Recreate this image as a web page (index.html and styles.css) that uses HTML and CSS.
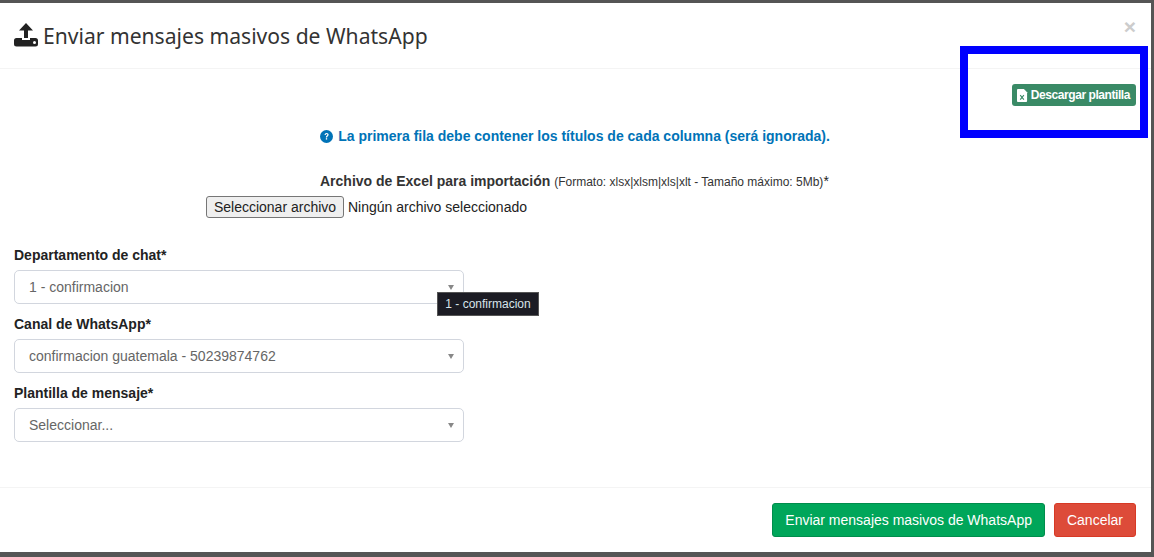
FILE: index.html
```html
<!DOCTYPE html>
<html lang="en">
<head>
  <meta charset="UTF-8">
  <title>Enviar mensajes masivos de WhatsApp</title>
  <link rel="stylesheet" href="styles.css">
</head>
<body>
  <div class="modal">
    <div class="modal-header">
      <h4 class="modal-title">
        <svg class="title-icon" viewBox="0 0 24 24" width="24" height="24">
          <path d="M12 0 L19 7.5 H14 V15 H10 V7.5 H5 Z" fill="#222"/>
          <path d="M2.5 15 H8 V17 H16 V15 H21.5 A2.5 2.5 0 0 1 24 17.5 V21 A2.5 2.5 0 0 1 21.5 23.5 H2.5 A2.5 2.5 0 0 1 0 21 V17.5 A2.5 2.5 0 0 1 2.5 15 Z" fill="#222"/>
          <circle cx="20.5" cy="19.5" r="1.5" fill="#fff"/>
        </svg>
        Enviar mensajes masivos de WhatsApp
      </h4>
      <span class="close">&times;</span>
    </div>

    <div class="modal-body">
      <div class="template-row">
        <a class="btn-template">
          <svg viewBox="0 0 12 14" width="11" height="13">
            <path d="M1 0 H7.5 L11 3.5 V13 A1 1 0 0 1 10 14 H1 A1 1 0 0 1 0 13 V1 A1 1 0 0 1 1 0 Z" fill="#fff"/>
            <path d="M3.5 6.5 L7.5 11.5 M7.5 6.5 L3.5 11.5" stroke="#3a8a66" stroke-width="1.2"/>
          </svg>
          Descargar plantilla
        </a>
      </div>

      <p class="info-line">
        <svg viewBox="0 0 14 14" width="13" height="13">
          <circle cx="7" cy="7" r="7" fill="#0073b7"/>
          <path d="M4.9 5.4 C4.9 4 6 3.2 7.1 3.2 C8.3 3.2 9.3 4 9.3 5.1 C9.3 6.6 7.6 6.6 7.6 8 H6.3 C6.3 6.2 7.9 6.1 7.9 5.2 C7.9 4.7 7.5 4.4 7 4.4 C6.5 4.4 6.2 4.8 6.2 5.4 Z" fill="#fff"/>
          <rect x="6.3" y="8.8" width="1.4" height="1.5" fill="#fff"/>
        </svg>
        La primera fila debe contener los títulos de cada columna (será ignorada).
      </p>

      <div class="upload-label">
        <b>Archivo de Excel para importación</b>
        <small>(Formato: xlsx|xlsm|xls|xlt - Tamaño máximo: 5Mb)</small><span class="req">*</span>
      </div>
      <div class="upload-row">
        <button class="file-btn">Seleccionar archivo</button>
        <span class="file-name">Ningún archivo seleccionado</span>
      </div>

      <div class="fields">
        <div class="field">
          <label>Departamento de chat*</label>
          <div class="select-box">1 - confirmacion<span class="caret"></span>
            <span class="tip">1 - confirmacion</span>
          </div>
        </div>
        <div class="field">
          <label>Canal de WhatsApp*</label>
          <div class="select-box">confirmacion guatemala - 50239874762<span class="caret"></span></div>
        </div>
        <div class="field">
          <label>Plantilla de mensaje*</label>
          <div class="select-box">Seleccionar...<span class="caret"></span></div>
        </div>
      </div>
    </div>

    <div class="modal-footer">
      <button class="btn btn-send">Enviar mensajes masivos de WhatsApp</button>
      <button class="btn btn-cancel">Cancelar</button>
    </div>
  </div>

  <!-- blue marker drawn over the page -->
  <div class="marker"></div>
</body>
</html>
```

FILE: styles.css
```css
html, body {
  height: 100%;
}

body {
  margin: 0;
  padding: 3px 3px 5px 0;
  box-sizing: border-box;
  overflow: hidden;
  background-color: #555;
  font-family: "Liberation Sans", Arial, sans-serif;
  font-size: 14px;
  color: #222;
}

.modal {
  height: 100%;
  display: flex;
  flex-direction: column;
  background-color: #fff;
}

.modal-header {
  height: 66px;
  flex: none;
  box-sizing: border-box;
  display: flex;
  justify-content: space-between;
  padding: 16px 15px 0 14px;
  border-bottom: 1px solid #f4f4f4;
}

.modal-title {
  margin: -15px 0 0 0;
  font-family: "Noto Sans", sans-serif;
  font-size: 21.1px;
  font-weight: 400;
  line-height: 32px;
  color: #333;
  display: flex;
  align-items: center;
  gap: 5px;
}

.title-icon {
  margin-top: -2px;
}

.close {
  font-size: 21px;
  font-weight: 700;
  line-height: 16px;
  color: #ccc;
}

.modal-body {
  flex: 1;
  padding: 15px 15px 0 14px;
}

.template-row {
  display: flex;
  justify-content: flex-end;
}

.btn-template {
  height: 22px;
  padding: 0 6px 0 5px;
  box-sizing: border-box;
  display: flex;
  align-items: center;
  gap: 3px;
  background-color: #3a8a66;
  border-radius: 3px;
  color: #fff;
  font-size: 12px;
  font-weight: 700;
  letter-spacing: -0.43px;
}

.info-line {
  margin: 22px 0 0 0;
  display: flex;
  justify-content: center;
  align-items: center;
  gap: 5px;
  line-height: 16px;
  font-size: 14px;
  font-weight: 700;
  color: #0073b7;
}

.upload-label {
  margin-top: 28px;
  padding-left: 306px;
  line-height: 18px;
}

.upload-label b {
  color: #333;
  font-size: 14px;
}

.upload-label small {
  font-size: 12px;
  color: #333;
}

.req {
  font-size: 14px;
}

.upload-row {
  margin-top: 5px;
  padding-left: 192px;
  height: 22px;
  display: flex;
  align-items: center;
  gap: 4px;
}

.file-btn {
  height: 22px;
  width: 138px;
  padding: 0;
  box-sizing: border-box;
  border: 1px solid #767676;
  border-radius: 3px;
  background-color: #efefef;
  font-family: "Liberation Sans", Arial, sans-serif;
  font-size: 14px;
  color: #222;
}

.file-name {
  font-size: 14px;
  color: #222;
}

.fields {
  margin-top: 29px;
  width: 450px;
  display: flex;
  flex-direction: column;
  gap: 12px;
}

.field label {
  display: block;
  font-size: 14px;
  font-weight: 700;
  color: #222;
  line-height: 17px;
  margin-bottom: 6px;
}

.select-box {
  position: relative;
  height: 34px;
  box-sizing: border-box;
  padding-left: 14px;
  border: 1px solid #d2d6de;
  border-radius: 5px;
  font-size: 14px;
  line-height: 32px;
  color: #666;
}

.caret {
  position: absolute;
  right: 9px;
  top: 14px;
  border-left: 3.5px solid transparent;
  border-right: 3.5px solid transparent;
  border-top: 5px solid #888;
}

.tip {
  position: absolute;
  left: 422px;
  top: 21px;
  width: 102px;
  height: 24px;
  box-sizing: border-box;
  border: 1px solid #555;
  background-color: #1c1c24;
  color: #d8e4ea;
  font-size: 12px;
  line-height: 22px;
  text-align: center;
  white-space: nowrap;
  z-index: 2;
}

.modal-footer {
  height: 65px;
  flex: none;
  box-sizing: border-box;
  display: flex;
  justify-content: flex-end;
  gap: 9px;
  padding: 15px 15px 0 0;
  border-top: 1px solid #f4f4f4;
}

.btn {
  height: 34px;
  padding: 0 12px;
  border-radius: 3px;
  font-family: "Liberation Sans", Arial, sans-serif;
  font-size: 14px;
  color: #fff;
  cursor: pointer;
}

.btn-send {
  background-color: #00a65a;
  border: 1px solid #008d4c;
}

.btn-cancel {
  background-color: #dd4b39;
  border: 1px solid #d73925;
}

.marker {
  position: absolute;
  left: 960px;
  top: 46px;
  width: 188px;
  height: 92px;
  box-sizing: border-box;
  border: 8px solid #0000ff;
}
```
